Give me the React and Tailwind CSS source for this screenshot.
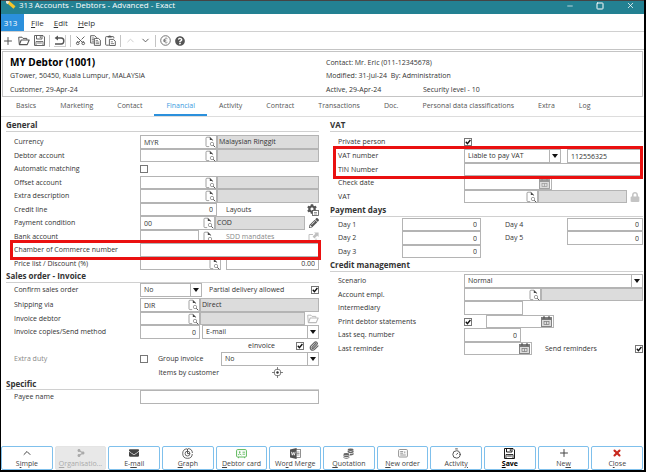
import React, { useState } from 'react';
import { ChevronDown, ChevronUp, Minus, Paperclip, Plus, Scissors, Square, Timer, X } from 'lucide-react';
import { FaCog, FaLock, FaPencilAlt, FaQuestionCircle, FaShareAlt, FaEnvelope } from 'react-icons/fa';

const LookupIcon = () => (
  <svg width="11" height="12" viewBox="0 0 11 12" fill="none" stroke="#8a8a8a" strokeWidth=".8">
    <path d="M4.2 10.6H2Q1 10.6 1 9.6V2.2Q1 1.2 2 1.2H5L7.6 4V5" />
    <path d="M4.8 1V4.1H7.8Z" fill="#444" stroke="none" />
    <circle cx="7" cy="8" r="1.7" />
    <path d="M8.2 9.3L10.3 11.2" stroke="#555" strokeWidth="1" />
  </svg>
);

const CalendarIcon = ({ muted }) => (
  <svg width="11" height="11" viewBox="0 0 11 11" fill="none" stroke={muted ? '#999' : '#777'}>
    <rect x=".5" y="1.5" width="10" height="9" fill="#ddd" strokeWidth=".9" />
    <path d="M.5 3H10.5" strokeWidth="2" />
    <path d="M3 0V2.5M8 0V2.5" stroke={muted ? '#888' : '#444'} />
    <rect x="3" y="5.5" width="5" height="3" strokeWidth=".7" />
    <path d="M5.5 5.5V8.5" strokeWidth=".7" />
  </svg>
);

const FolderIcon = () => (
  <svg width="12" height="10" viewBox="0 0 12 10" fill="none" stroke="currentColor" strokeLinejoin="round">
    <path d="M1.3 8.5L.7 1.2H4L5 2.4H8.8V3.8" />
    <path d="M1.4 8.6L3.2 4H11.2L9.2 8.6Z" strokeWidth="1.1" />
  </svg>
);

const SaveIcon = () => (
  <svg width="11" height="11" viewBox="0 0 11 11" fill="none" stroke="currentColor">
    <path d="M.5 .5H9L10.5 2V10.5H.5Z" strokeWidth=".9" />
    <path d="M2.5 .5V4H8V.5M6.3 1.2V3" strokeWidth=".9" />
    <path d="M2 10.5V6.5H9V10.5M3.2 8H7.8" strokeWidth=".8" />
  </svg>
);

const UndoIcon = () => (
  <svg width="11" height="11" viewBox="0 0 11 11" fill="none" stroke="currentColor">
    <path d="M2 3H7.2Q9.8 3 9.8 6Q9.8 9 7.2 9H1" strokeWidth="1.4" />
    <path d="M4 .4L.6 3L4 5.6Z" fill="currentColor" stroke="none" />
  </svg>
);

const CopyIcon = () => (
  <svg width="11" height="11" viewBox="0 0 11 11" fill="#fff" stroke="currentColor" strokeWidth=".9">
    <path d="M.6 .7H4.6L6.6 2.5V8H.6Z" />
    <path d="M1.8 3H4M1.8 4.6H4M1.8 6.2H4" strokeWidth=".7" />
    <path d="M4.4 3.4H8.4L10.4 5.2V10.4H4.4Z" />
    <path d="M5.7 5.6H8M5.7 7.1H9.2M5.7 8.6H9.2" strokeWidth=".7" />
  </svg>
);

const PasteIcon = () => (
  <svg width="11" height="11" viewBox="0 0 11 11" fill="none" stroke="currentColor" strokeWidth=".9">
    <path d="M3.8 10.2H1.4Q.6 10.2 .6 9.4V2.4Q.6 1.6 1.4 1.6H8Q8.8 1.6 8.8 2.4V3.4" />
    <path d="M2.8 2.6V1.4Q4.7 -.3 6.6 1.4V2.6Z" fill="currentColor" stroke="none" />
    <path d="M4.4 4.4H8.3L10.3 6.2V10.5H4.4Z" fill="#fff" />
    <path d="M5.8 6.8H8M5.8 8.6H9" strokeWidth=".7" />
  </svg>
);

const EuroIcon = () => (
  <svg width="11" height="11" viewBox="0 0 11 11" fill="none" stroke="#666">
    <circle cx="5.5" cy="5.5" r="4.8" strokeWidth=".9" />
    <path d="M7.4 3.7Q6.4 2.8 5.3 3.3Q4.2 3.8 4.2 5.5Q4.2 7.2 5.3 7.7Q6.4 8.2 7.4 7.3M3.3 5H6.3M3.3 6.1H6.3" strokeWidth=".8" />
  </svg>
);

const TargetIcon = () => (
  <svg width="11" height="11" viewBox="0 0 11 11" fill="none" stroke="#666" strokeWidth=".8">
    <circle cx="5.5" cy="5.5" r="3.4" />
    <circle cx="5.5" cy="5.5" r="1.2" fill="#333" stroke="none" />
    <path d="M5.5 0V3M5.5 8V11M0 5.5H3M8 5.5H11" />
  </svg>
);

const ShareIcon = () => (
  <svg width="11" height="10" viewBox="0 0 11 10" fill="none" stroke="#c0c0c0">
    <path d="M5 2.5H1V9.2H8V6.5" />
    <path d="M6 .4H10.6V5L9.2 3.7L6.4 6.4L4.6 4.6L7.4 1.8Z" fill="#c0c0c0" stroke="none" />
  </svg>
);

const GearIcon = () => (
  <span className="relative block size-3">
    <FaCog size={10} />
    <svg className="absolute right-0 bottom-0" width="7" height="6" viewBox="0 0 7 6">
      <rect x=".5" y=".5" width="6" height="5" fill="#fff" stroke="#555" strokeWidth=".8" />
      <path d="M2 2.5H5M2 4H5" stroke="#555" strokeWidth=".6" />
    </svg>
  </span>
);

const GraphIcon = () => (
  <svg width="11" height="11" viewBox="0 0 11 11" fill="none" stroke="#555">
    <path d="M5 .8A4.8 4.8 0 1 0 10.3 6" strokeWidth=".9" />
    <path d="M6 .6A4.6 4.6 0 0 1 10.4 5" strokeWidth=".9" />
    <circle cx="5.5" cy="5.6" r="2.4" strokeWidth=".9" />
    <path d="M5.5 .8V5.6H8" strokeWidth="1" />
  </svg>
);

const CardIcon = () => (
  <svg width="11" height="11" viewBox="0 0 11 11" fill="none" stroke="#5cb85a">
    <rect x=".6" y="1.6" width="9.8" height="7.4" rx="1" />
    <circle cx="3.7" cy="4.1" r=".9" fill="#5cb85a" stroke="none" />
    <path d="M2 7Q3.7 4.6 5.4 7M6.5 4.2H9M6.5 6.2H9M2.5 9V10.2M8.5 9V10.2" strokeWidth=".9" />
  </svg>
);

const WordIcon = () => (
  <svg width="11" height="11" viewBox="0 0 11 11">
    <rect x="5.5" y="1.5" width="5" height="8" fill="#fff" stroke="#777" strokeWidth=".8" />
    <path d="M6.5 4H9.5M6.5 5.5H9.5M6.5 7H9.5" stroke="#777" strokeWidth=".7" />
    <path d="M0 1.4L6.6 0V11L0 9.6Z" fill="#505050" />
    <path d="M1.4 3.8L2.3 7.2L3.3 4.4L4.3 7.2L5.2 3.8" fill="none" stroke="#fff" strokeWidth=".8" />
  </svg>
);

const CoinsIcon = () => (
  <svg width="11" height="11" viewBox="0 0 11 11" fill="#666">
    <ellipse cx="7.6" cy="1.8" rx="3" ry="1.3" />
    <path d="M4.6 2.6Q7.6 4.8 10.6 2.6V4.2Q7.6 6.2 4.6 4.2ZM6.8 5.9Q9 5.9 10.6 4.9V6.6Q9.4 7.6 6.8 7.6Z" />
    <ellipse cx="3.4" cy="6.2" rx="3" ry="1.3" />
    <path d="M.4 7Q3.4 9.2 6.4 7V8.3Q3.4 10 .4 8.3ZM.4 9Q3.4 10.8 6.4 9V9.8Q3.4 11.8 .4 9.8Z" />
  </svg>
);

const OrderIcon = () => (
  <svg width="10" height="11" viewBox="0 0 10 11" fill="none" stroke="#888" strokeWidth=".9">
    <rect x=".6" y="1.5" width="8.8" height="7.5" rx="1" />
    <path d="M2.2 3.6H5.2M2.2 5.2H5.2M2.2 7H7.8M6.8 3.4V5.4" />
  </svg>
);

const FIELD = 'h-full min-w-0 border border-[#b4b4b4] bg-white text-[#333]';

const Row = ({ label, id, muted, size = 'odd:h-[14px] even:h-[13px]', children }) => (
  <div className={`relative flex items-center ${size}`}>
    <label htmlFor={id} className={`w-[134px] shrink-0 pl-2 whitespace-nowrap ${muted ? 'text-[#888]' : ''}`}>
      {label}
    </label>
    {children}
  </div>
);

const Text = ({ id, value = '', className = 'flex-1', label }) => (
  <input id={id} aria-label={label} defaultValue={value} className={`${FIELD} px-[3px] ${className}`} />
);

const Lookup = ({ id, value = '', className = 'w-[77px]' }) => (
  <div className={`${FIELD} flex shrink-0 items-center ${className}`}>
    <input id={id} defaultValue={value} className="h-full min-w-0 flex-1 pl-[3px] outline-none" />
    <button type="button" aria-label="Look up" className="shrink-0">
      <LookupIcon />
    </button>
  </div>
);

const DateField = ({ id, label, className, muted }) => (
  <div className={`${FIELD} flex shrink-0 items-center pr-px ${className}`}>
    <input id={id} aria-label={label} className="h-full min-w-0 flex-1 pl-[3px] outline-none" />
    <button type="button" aria-label="Pick a date">
      <CalendarIcon muted={muted} />
    </button>
  </div>
);

const Output = ({ children }) => (
  <output className="flex h-full min-w-0 flex-1 items-center border border-[#b4b4b4] bg-[#dcdcdc] px-px">{children}</output>
);

const Select = ({ id, label, value, className = 'flex-1' }) => (
  <div className={`${FIELD} relative ${className}`}>
    <select id={id} aria-label={label} className="block h-full w-full appearance-none pl-[3px]">
      <option>{value}</option>
    </select>
    <span className="pointer-events-none absolute inset-y-0 right-0 flex w-[11px] items-center justify-center border-l border-[#b4b4b4] bg-white">
      <svg width="6" height="4" viewBox="0 0 6 4">
        <path d="M0 0H6L3 4Z" fill="#111" />
      </svg>
    </span>
  </div>
);

const Check = ({ id, label, checked = false }) => {
  const [on, setOn] = useState(checked);
  return (
    <span className="relative block size-2 shrink-0">
      <input
        id={id}
        aria-label={label}
        type="checkbox"
        checked={on}
        onChange={() => setOn(!on)}
        className="block size-2 appearance-none border border-[#777] bg-white"
      />
      {on && (
        <svg className="pointer-events-none absolute inset-0" width="8" height="8" viewBox="0 0 8 8" fill="none">
          <path d="M1.8 3.8L3.4 5.6L6.4 2" stroke="#111" strokeWidth="1.4" />
        </svg>
      )}
    </span>
  );
};

const Heading = ({ children, className = 'h-[13px]' }) => (
  <h2 className={`flex items-center border-b border-[#d0d0d0] text-[8px] font-bold text-[#333] ${className}`}>{children}</h2>
);

const Highlight = ({ className }) => (
  <span className={`pointer-events-none absolute z-10 border-[3px] border-[#ea1010] ${className}`} />
);

const Divider = () => <span className="h-3 w-px bg-[#c4c4c4]" />;

// The letter at `at` is the keyboard mnemonic.
const Mnemonic = ({ text, at }) => (
  <span>
    {text.slice(0, at)}
    <u>{text[at]}</u>
    {text.slice(at + 1)}
  </span>
);

const TABS = [
  'Basics',
  'Marketing',
  'Contact',
  'Financial',
  'Activity',
  'Contract',
  'Transactions',
  'Doc.',
  'Personal data classifications',
  'Extra',
  'Log',
];

const ACTIONS = [
  { text: 'Simple', at: 1, icon: <ChevronUp size={12} strokeWidth={2} /> },
  { text: 'Organisatio...', at: 0, icon: <FaShareAlt size={8} className="rotate-180" />, disabled: true },
  { text: 'E-mail', at: 2, icon: <FaEnvelope size={10} /> },
  { text: 'Graph', at: 0, icon: <GraphIcon /> },
  { text: 'Debtor card', at: 0, icon: <CardIcon /> },
  { text: 'Word Merge', at: 2, icon: <WordIcon /> },
  { text: 'Quotation', at: 0, icon: <CoinsIcon /> },
  { text: 'New order', at: 0, icon: <OrderIcon /> },
  { text: 'Activity', at: 7, icon: <Timer size={11} /> },
  { text: 'Save', at: 0, icon: <SaveIcon />, bold: true },
  { text: 'New', at: 2, icon: <Plus size={12} /> },
  { text: 'Close', at: 1, icon: <X size={10} strokeWidth={5} className="text-[#c8281e]" /> },
];

const TitleBar = () => (
  <header className="flex h-[14px] items-start border-t border-[#444] bg-[#238192] pr-[9px] pl-[5px] text-white">
    <svg width="10" height="8" viewBox="0 0 10 8">
      <path d="M1 0L8.5 6.5" stroke="#f7c52b" strokeWidth="3" />
      <path d="M0 0L2.5 2" stroke="#e9e2d0" strokeWidth="3" />
    </svg>
    <h1 className="ml-[3px] text-[8px] leading-[8px] whitespace-nowrap">313 Accounts - Debtors - Advanced - Exact</h1>
    <div className="ml-auto flex gap-[22px]">
      <button type="button" aria-label="Minimise"><Minus size={8} /></button>
      <button type="button" aria-label="Maximise"><Square size={8} strokeWidth={3} /></button>
      <button type="button" aria-label="Close window"><X size={9} /></button>
    </div>
  </header>
);

const MenuBar = () => (
  <nav className="flex h-[18px] items-center border-b border-[#d0d0d0] text-[8px]">
    <button type="button" className="h-full w-[23px] bg-[#2b90dc] pr-1 text-white">313</button>
    <div className="flex gap-[10px] pl-[7px]">
      <button type="button"><Mnemonic text="File" at={0} /></button>
      <button type="button"><Mnemonic text="Edit" at={0} /></button>
      <button type="button"><Mnemonic text="Help" at={0} /></button>
    </div>
  </nav>
);

const Toolbar = () => (
  <div className="flex h-[18px] items-center gap-[4px] border-b border-[#c4c4c4] pl-px text-[#555]">
    <button type="button" aria-label="New"><Plus size={12} strokeWidth={2} /></button>
    <button type="button" aria-label="Open"><FolderIcon /></button>
    <button type="button" aria-label="Save"><SaveIcon /></button>
    <Divider />
    <button type="button" aria-label="Undo" className="border-r border-b border-[#ccc]"><UndoIcon /></button>
    <Divider />
    <button type="button" aria-label="Cut"><Scissors size={11} className="-rotate-90" /></button>
    <button type="button" aria-label="Copy"><CopyIcon /></button>
    <button type="button" aria-label="Paste"><PasteIcon /></button>
    <Divider />
    <button type="button" aria-label="Previous" className="text-[#ccc]"><ChevronUp size={11} /></button>
    <button type="button" aria-label="Next"><ChevronDown size={11} /></button>
    <Divider />
    <button type="button" aria-label="Currency"><EuroIcon /></button>
    <button type="button" aria-label="Help"><FaQuestionCircle size={10} /></button>
  </div>
);

const LeftColumn = () => (
  <div>
    <Heading>General</Heading>
    <div className="pt-[3px]">
      <Row label="Currency" id="currency">
        <Lookup id="currency" value="MYR" />
        <Output>Malaysian Ringgit</Output>
      </Row>
      <Row label="Debtor account" id="debtor">
        <Lookup id="debtor" />
        <Output />
      </Row>
      <Row label="Automatic matching" id="matching">
        <Check id="matching" />
      </Row>
      <Row label="Offset account" id="offset">
        <Lookup id="offset" />
        <Output />
      </Row>
      <Row label="Extra description" id="description">
        <Lookup id="description" />
        <Output />
      </Row>
      <Row label="Credit line" id="credit">
        <Text id="credit" value="0" className="w-[77px] text-right" />
        <span className="pl-[9px]">Layouts</span>
        <button type="button" aria-label="Layouts" className="ml-auto text-[#555]"><GearIcon /></button>
      </Row>
      <Row label="Payment condition" id="condition">
        <Lookup id="condition" value="00" className="w-[75px]" />
        <Output>COD</Output>
        <button type="button" aria-label="Edit condition" className="pl-1 text-[#555]"><FaPencilAlt size={10} /></button>
      </Row>
      <Row label="Bank account" id="bank">
        <Text id="bank" className="w-[59px]" />
        <button type="button" aria-label="Look up" className="pl-1"><LookupIcon /></button>
        <span className="pl-3 text-[#888]">SDD mandates</span>
        <button type="button" aria-label="SDD mandates" className="ml-auto"><ShareIcon /></button>
      </Row>
      <Row label="Chamber of Commerce number" id="chamber">
        <Text id="chamber" />
        <Highlight className="-inset-y-[3px] -right-[2px] left-1" />
      </Row>
      <Row label="Price list / Discount (%)" id="price">
        <Lookup id="price" className="w-[81px]" />
        <Text label="Discount" value="0.00" className="ml-[5px] flex-1 text-right" />
      </Row>
    </div>

    <Heading>Sales order - Invoice</Heading>
    <div>
      <Row label="Confirm sales order" id="confirm" size="h-[14px]">
        <Select id="confirm" value="No" className="w-[62px]" />
        <label htmlFor="partial" className="pl-[7px]">Partial delivery allowed</label>
        <span className="ml-auto"><Check id="partial" checked /></span>
      </Row>
      <div className="pt-px">
        <Row label="Shipping via" id="shipping">
          <Lookup id="shipping" value="DIR" className="w-[60px]" />
          <Output>Direct</Output>
        </Row>
        <Row label="Invoice debtor" id="invoice">
          <Lookup id="invoice" className="w-[60px]" />
          <Output />
          <button type="button" aria-label="Open debtor" className="pl-[2px] text-[#bbb]"><FolderIcon /></button>
        </Row>
        <Row label="Invoice copies/Send method" id="copies">
          <Text id="copies" value="0" className="w-[60px] text-right" />
          <Select label="Send method" value="E-mail" className="ml-[2px] flex-1" />
        </Row>
        <div className="flex h-[13px] items-center justify-end">
          <label htmlFor="einvoice" className="pr-[21px]">eInvoice</label>
          <Check id="einvoice" checked />
          <button type="button" aria-label="Attachment" className="pl-[5px] text-[#666]"><Paperclip size={10} strokeWidth={3} /></button>
        </div>
        <Row label="Extra duty" id="duty" muted>
          <Check id="duty" />
          <label htmlFor="group" className="w-[73px] pl-[10px]">Group invoice</label>
          <Select id="group" value="No" />
        </Row>
        <div className="flex h-[13px] items-center justify-end">
          <span>Items by customer</span>
          <button type="button" aria-label="Items by customer" className="pr-9 pl-[53px]"><TargetIcon /></button>
        </div>
      </div>
    </div>

    <Heading className="h-[11px]">Specific</Heading>
    <div>
      <Row label="Payee name" id="payee">
        <Text id="payee" />
      </Row>
    </div>
  </div>
);

const DayField = ({ day, labelClass, fieldClass }) => (
  <>
    <label htmlFor={`day-${day}`} className={`shrink-0 ${labelClass}`}>Day {day}</label>
    <Text id={`day-${day}`} value="0" className={`text-right ${fieldClass}`} />
  </>
);

const RightColumn = () => (
  <div>
    <Heading>VAT</Heading>
    <div className="pt-[3px]">
      <Row label="Private person" id="private">
        <Check id="private" checked />
      </Row>
      <div className="relative">
        <Row label="VAT number" id="vat-number">
          <Select label="VAT liability" value="Liable to pay VAT" className="w-[97px]" />
          <Text id="vat-number" value="112556325" className="ml-[6px] flex-1" />
        </Row>
        <Row label="TIN Number" id="tin">
          <Text id="tin" />
        </Row>
        <Highlight className="-inset-y-[3px] right-0 left-[3px]" />
      </div>
      <Row label="Check date" id="check-date">
        <DateField id="check-date" className="w-[88px]" muted />
      </Row>
      <Row label="VAT" id="vat">
        <Lookup id="vat" className="w-[74px]" />
        <Output />
        <FaLock size={10} className="mr-[3px] ml-[3px] text-[#c4c4c4]" />
      </Row>
    </div>

    <Heading className="h-[14px]">Payment days</Heading>
    <div className="pt-px pl-2">
      <div className="flex h-[13px] items-center">
        <DayField day={1} labelClass="w-[64px]" fieldClass="w-[79px]" />
        <DayField day={4} labelClass="w-[86px] pl-6" fieldClass="flex-1" />
      </div>
      <div className="flex h-[14px] items-center">
        <DayField day={2} labelClass="w-[64px]" fieldClass="w-[79px]" />
        <DayField day={5} labelClass="w-[86px] pl-6" fieldClass="flex-1" />
      </div>
      <div className="flex h-[13px] items-center">
        <DayField day={3} labelClass="w-[64px]" fieldClass="w-[79px]" />
      </div>
    </div>

    <Heading className="h-[14px]">Credit management</Heading>
    <div className="pt-[2px]">
      <Row label="Scenario" id="scenario">
        <Select id="scenario" value="Normal" />
      </Row>
      <Row label="Account empl." id="empl">
        <Lookup id="empl" />
        <Output />
      </Row>
      <Row label="Intermediary" id="intermediary">
        <Text id="intermediary" className="w-[59px]" />
      </Row>
      <Row label="Print debtor statements" id="statements">
        <Check id="statements" checked />
        <DateField label="Statement date" className="ml-[14px] w-[68px]" />
      </Row>
      <Row label="Last seq. number" id="seq">
        <Text id="seq" value="0" className="w-[57px] text-right" />
      </Row>
      <Row label="Last reminder" id="reminder">
        <DateField id="reminder" className="w-[68px]" />
        <label htmlFor="send" className="pl-[13px]">Send reminders</label>
        <span className="ml-auto"><Check id="send" checked /></span>
      </Row>
    </div>
  </div>
);

export default function App() {
  const [tab, setTab] = useState('Financial');

  return (
    <div className="flex min-h-screen flex-col border-r-2 border-b-2 border-l border-black bg-white font-['Open_Sans',sans-serif] text-[7px] leading-[12px] text-[#333]">
      <TitleBar />
      <MenuBar />
      <Toolbar />

      <section className="mt-px mr-px ml-px grid h-[46px] grid-cols-2 border border-[#c4c4c4] pt-1 pl-[7px]">
        <div>
          <p className="text-[10px] leading-[13px] font-bold text-black">MY Debtor (1001)</p>
          <p className="leading-[14px]">GTower, 50450, Kuala Lumpur, MALAYSIA</p>
          <p className="leading-[13px]">Customer, 29-Apr-24</p>
        </div>
        <div>
          <p className="leading-[13px]">Contact: Mr. Eric (011-12345678)</p>
          <p className="leading-[14px]">Modified: 31-Jul-24&nbsp; By: Administration</p>
          <p className="flex leading-[13px]">
            <span className="w-[97px]">Active, 29-Apr-24</span>
            <span>Security level - 10</span>
          </p>
        </div>
      </section>

      <nav className="flex h-5 border-b border-[#ddd] pl-[3px]">
        {TABS.map((name) => (
          <button
            key={name}
            type="button"
            onClick={() => setTab(name)}
            className={`border-b-2 px-3 whitespace-nowrap ${
              name === tab ? 'border-[#2b90dc] text-[#3a9be0]' : 'border-transparent text-[#555]'
            }`}
          >
            {name}
          </button>
        ))}
      </nav>

      <main className="grid grid-cols-2 gap-[11px] pt-[2px] pr-px pl-[5px]">
        <LeftColumn />
        <RightColumn />
      </main>

      <footer className="mt-auto flex gap-[2px] pr-px">
        {ACTIONS.map(({ text, at, icon, disabled, bold }) => (
          <button
            key={text}
            type="button"
            disabled={disabled}
            className={`flex h-6 flex-1 flex-col items-center justify-between rounded-xs border whitespace-nowrap ${
              disabled ? 'border-[#e4e4e4] bg-[#e8e8e8] text-[#aaa]' : 'border-[#7fc0ec] bg-white text-[#444]'
            } ${bold ? 'font-bold text-black' : ''}`}
          >
            <span className="flex h-3 items-center">{icon}</span>
            <span className="leading-[10px]">
              <Mnemonic text={text} at={at} />
            </span>
          </button>
        ))}
      </footer>
    </div>
  );
}
